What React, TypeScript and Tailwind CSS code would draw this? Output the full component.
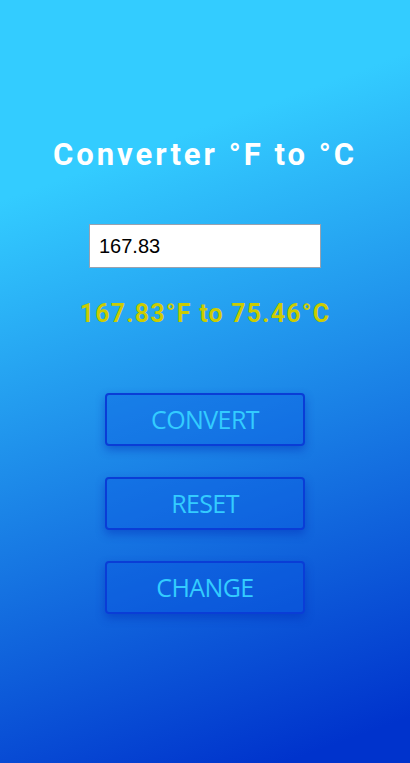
import React from 'react';

const buttons = ['CONVERT', 'RESET', 'CHANGE'];

const App = () => {
  return (
    <div className="w-[410px] h-[763px] overflow-hidden bg-[linear-gradient(160deg,#33ccff_22%,#0033cc_95%)] flex flex-col items-center">
      {/* Title */}
      <h1 className="mt-[133px] text-white text-[31px] leading-[44px] font-bold tracking-[3px] [font-family:Roboto,sans-serif]">
        Converter °F to °C
      </h1>

      {/* Input */}
      <input
        type="text"
        defaultValue="167.83"
        className="mt-[47px] w-[232px] h-[44px] bg-white border border-gray-400 px-[9px] text-[20px] text-black outline-none [font-family:'Liberation_Sans',sans-serif]"
      />

      {/* Result */}
      <p className="mt-[28px] text-[#cccc00] text-[25px] leading-[36px] font-bold tracking-[1.2px] [font-family:Roboto,sans-serif]">
        167.83°F to 75.46°C
      </p>

      {/* Buttons */}
      <div className="mt-[61px] flex flex-col gap-[31px]">
        {buttons.map((b) => (
          <button
            key={b}
            className="w-[200px] h-[53px] rounded-[4px] border-2 border-[#0a3dd6] bg-[#0a55e0]/35 shadow-[0_4px_10px_rgba(0,40,180,0.45)] text-[#33ccff] text-[25px] tracking-[-0.6px] [font-family:'Open_Sans',sans-serif]"
          >
            {b}
          </button>
        ))}
      </div>
    </div>
  );
};

export default App;
